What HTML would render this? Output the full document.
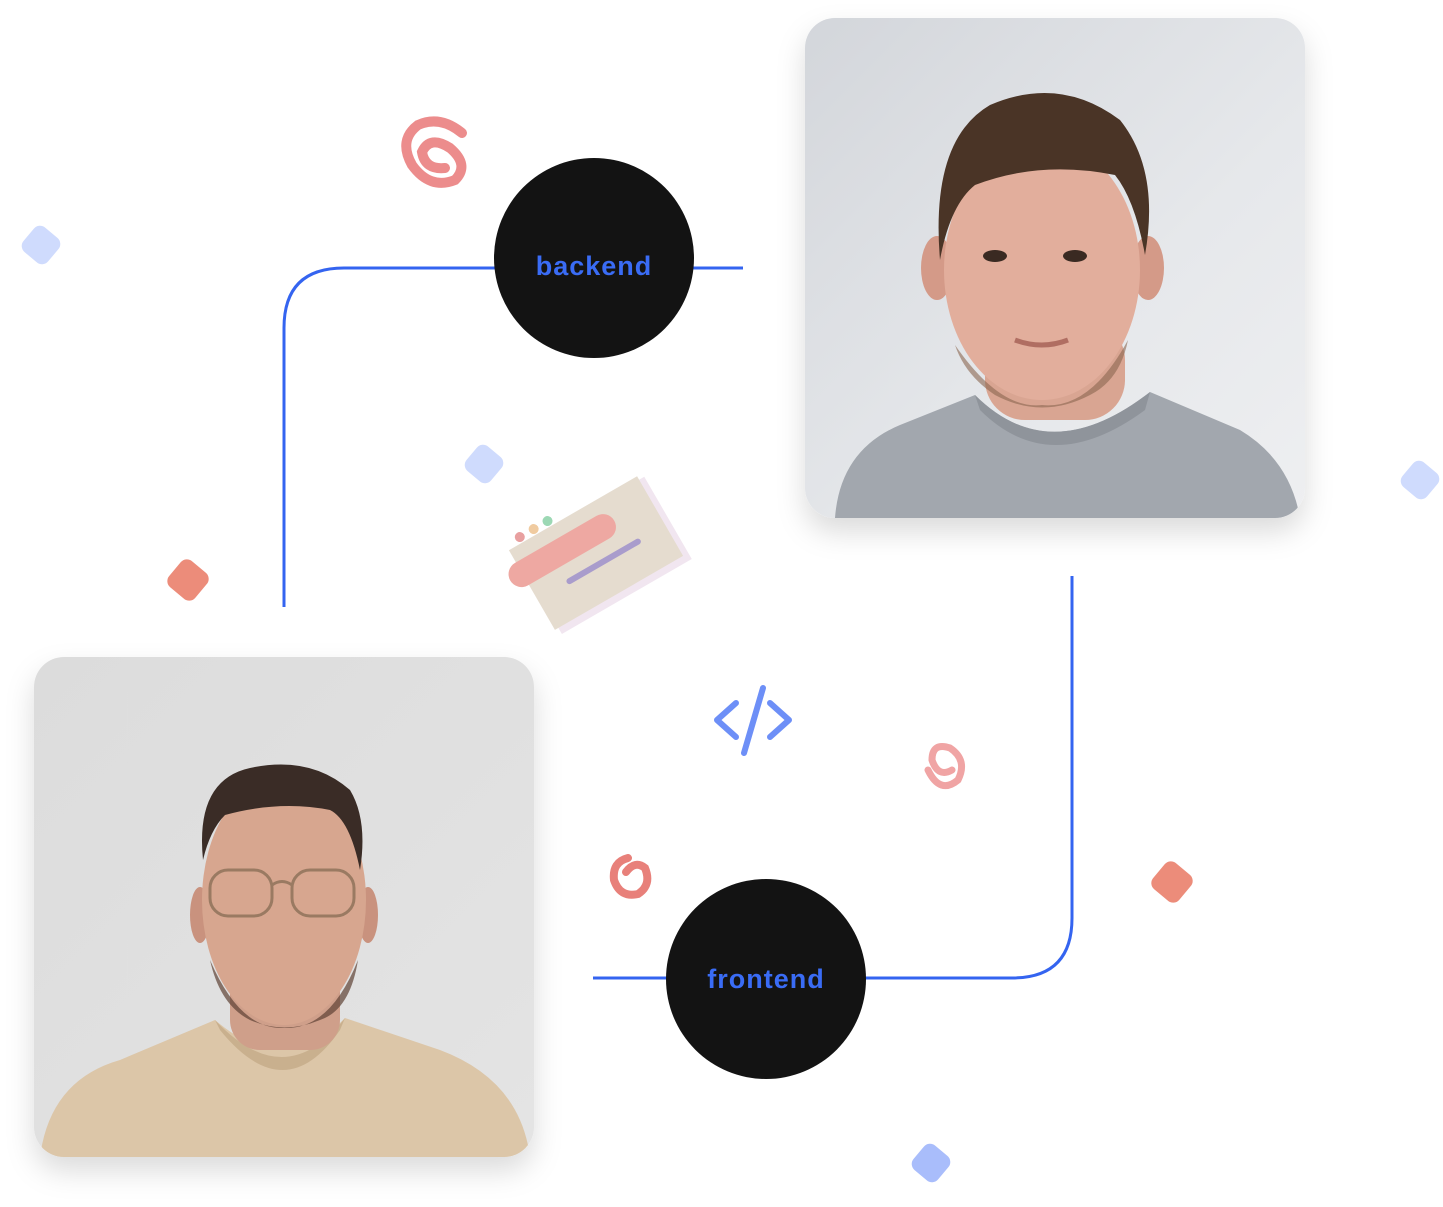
<!DOCTYPE html>
<html><head><meta charset="utf-8"><style>
html,body{margin:0;padding:0;background:#fff;}
body{width:1443px;height:1207px;position:relative;overflow:hidden;font-family:"Liberation Sans",sans-serif;}
svg{position:absolute;left:0;top:0;}
</style></head><body>
<svg width="1443" height="1207" viewBox="0 0 1443 1207">
<defs>
<linearGradient id="bg1" x1="0" y1="0" x2="1" y2="1"><stop offset="0" stop-color="#d3d6db"/><stop offset="0.6" stop-color="#e6e8eb"/><stop offset="1" stop-color="#eeeff1"/></linearGradient>
<linearGradient id="bg2" x1="0" y1="0" x2="1" y2="1"><stop offset="0" stop-color="#dcdcdc"/><stop offset="1" stop-color="#e4e4e4"/></linearGradient>
<filter id="sh" x="-20%" y="-20%" width="140%" height="150%"><feDropShadow dx="0" dy="14" stdDeviation="14" flood-color="#000" flood-opacity="0.14"/></filter>
<clipPath id="c1"><rect x="805" y="18" width="500" height="500" rx="30"/></clipPath>
<clipPath id="c2"><rect x="34" y="657" width="500" height="500" rx="30"/></clipPath>
</defs>

<g fill="none" stroke="#3464f0" stroke-width="3">
<path d="M284 607 V328 Q284 268 344 268 H743"/>
<path d="M1072 576 V918 Q1072 978 1012 978 H593"/>
</g>

<g filter="url(#sh)"><rect x="805" y="18" width="500" height="500" rx="30" fill="url(#bg1)"/></g>
<g clip-path="url(#c1)">
<path d="M835 518 Q840 450 900 425 L975 395 Q1050 470 1150 392 L1240 430 Q1290 460 1300 518 Z" fill="#a2a7ae"/>
<path d="M975 395 Q1050 470 1150 392 L1145 410 Q1050 480 980 410Z" fill="#8f949b"/>
<rect x="985" y="320" width="140" height="100" rx="40" fill="#d9a592"/>
<ellipse cx="937" cy="268" rx="16" ry="32" fill="#d49a88"/>
<ellipse cx="1148" cy="268" rx="16" ry="32" fill="#d49a88"/>
<ellipse cx="1042" cy="270" rx="98" ry="130" fill="#e2ae9c"/>
<path d="M955 345 Q1000 410 1042 405 Q1090 410 1128 340 Q1120 380 1090 395 Q1042 420 995 395 Q965 375 955 345Z" fill="#8a6650" opacity="0.6"/>
<path d="M940 260 Q930 140 990 105 Q1060 75 1120 120 Q1160 170 1145 255 Q1135 200 1115 175 Q1040 160 975 185 Q950 205 940 260Z" fill="#4a3426"/>
<ellipse cx="995" cy="256" rx="12" ry="6" fill="#3a2a22"/>
<ellipse cx="1075" cy="256" rx="12" ry="6" fill="#3a2a22"/>
<path d="M1015 340 Q1042 350 1068 340" stroke="#b06e62" stroke-width="5" fill="none"/>
</g>

<g filter="url(#sh)"><rect x="34" y="657" width="500" height="500" rx="30" fill="url(#bg2)"/></g>
<g clip-path="url(#c2)">
<path d="M40 1157 Q50 1080 120 1060 L215 1020 Q285 1080 345 1018 L440 1050 Q520 1080 530 1157Z" fill="#dcc6a8"/>
<path d="M215 1020 Q285 1095 345 1018 L340 1030 Q285 1110 220 1030Z" fill="#c9b08e"/>
<rect x="230" y="960" width="110" height="90" rx="30" fill="#cf9f8a"/>
<ellipse cx="200" cy="915" rx="10" ry="28" fill="#c9927e"/>
<ellipse cx="368" cy="915" rx="10" ry="28" fill="#c9927e"/>
<ellipse cx="284" cy="900" rx="82" ry="125" fill="#d7a68f"/>
<path d="M210 960 Q240 1030 284 1028 Q330 1030 358 960 Q350 1010 320 1020 Q284 1035 250 1020 Q220 1005 210 960Z" fill="#5e4234" opacity="0.7"/>
<path d="M203 860 Q195 780 250 768 Q310 755 350 790 Q368 820 360 870 Q350 820 330 810 Q280 800 225 815 Q210 830 203 860Z" fill="#3a2c26"/>
<g fill="none" stroke="#9a7a62" stroke-width="3"><rect x="210" y="870" width="62" height="46" rx="18"/><rect x="292" y="870" width="62" height="46" rx="18"/><path d="M272 885 Q282 878 292 885"/></g>
</g>

<circle cx="594" cy="258" r="100" fill="#131313"/>
<text x="594" y="275" text-anchor="middle" font-size="27" font-weight="bold" letter-spacing="1" fill="#3a6cf5">backend</text>
<circle cx="766" cy="979" r="100" fill="#131313"/>
<text x="766" y="988" text-anchor="middle" font-size="27" font-weight="bold" letter-spacing="1" fill="#3a6cf5">frontend</text>

<g>
<rect x="25" y="229" width="32" height="32" rx="8" fill="#cfdbfd" transform="rotate(40 41 245)"/>
<rect x="468" y="448" width="32" height="32" rx="8" fill="#cfdbfd" transform="rotate(40 484 464)"/>
<rect x="1404" y="464" width="32" height="32" rx="8" fill="#cfdbfd" transform="rotate(40 1420 480)"/>
<rect x="915" y="1147" width="32" height="32" rx="8" fill="#a9bdfb" transform="rotate(40 931 1163)"/>
<rect x="171" y="563" width="34" height="34" rx="8" fill="#ec8c7a" transform="rotate(40 188 580)"/>
<rect x="1155" y="865" width="34" height="34" rx="8" fill="#ec8c7a" transform="rotate(40 1172 882)"/>
</g>

<g fill="none" stroke="#6d8ff7" stroke-width="6" stroke-linecap="round" stroke-linejoin="round">
<path d="M736 703 L717 720 L736 737"/><path d="M770 703 L789 720 L770 737"/><path d="M763 688 L744 753"/>
</g>

<g fill="none" stroke="#ec8c8c" stroke-width="10" stroke-linecap="round">
<path d="M462 133 Q440 115 418 125 Q398 140 412 165 Q430 190 455 180 Q470 165 450 148 Q430 135 422 152 Q425 170 445 168"/>
</g>
<g fill="none" stroke="#f0a4a4" stroke-width="7" stroke-linecap="round">
<path d="M928 770 Q940 795 958 780 Q968 760 950 748 Q932 742 932 760 Q938 778 952 770"/>
</g>
<g fill="none" stroke="#e8807a" stroke-width="8" stroke-linecap="round">
<path d="M628 858 Q612 862 614 880 Q620 898 638 894 Q652 885 645 868 Q635 860 626 872"/>
</g>

<g transform="rotate(-30 600 560)">
<rect x="530" y="510" width="150" height="95" fill="#f1e6f0"/>
<rect x="526" y="506" width="148" height="92" fill="#e5dccf"/>
<circle cx="542" cy="500" r="5" fill="#e8a0a0"/>
<circle cx="558" cy="500" r="5" fill="#f0cba0"/>
<circle cx="574" cy="500" r="5" fill="#9cd8b4"/>
<rect x="512" y="520" width="120" height="26" rx="13" fill="#eea8a2"/>
<rect x="560" y="560" width="85" height="6" rx="3" fill="#a99ccc"/>
</g>
</svg>
</body></html>
